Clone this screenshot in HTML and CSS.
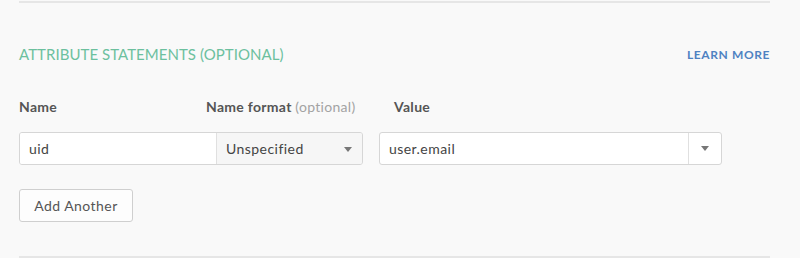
FILE: index.html
```html
<!DOCTYPE html>
<html lang="en">
<head>
    <meta charset="UTF-8">
    <meta name="viewport" content="width=device-width, initial-scale=1.0">
    <title>Attribute Statements</title>
    <link rel="stylesheet" href="styles.css">
</head>
<body>
    <div class="container">
        <div class="rule top"></div>
        <div class="header">
            <h2 class="title">ATTRIBUTE STATEMENTS (OPTIONAL)</h2>
            <a class="learn" href="#">LEARN MORE</a>
        </div>
        <div class="labels">
            <span class="label name">Name</span>
            <span class="label format">Name format <em>(optional)</em></span>
            <span class="label value">Value</span>
        </div>
        <div class="row">
            <div class="combo">
                <div class="field uid">uid</div>
                <div class="field select">
                    Unspecified
                    <span class="caret"></span>
                </div>
            </div>
            <div class="field valuebox">
                <span class="val">user.email</span>
                <span class="drop"><span class="caret"></span></span>
            </div>
        </div>
        <button class="add">Add Another</button>
        <div class="rule bottom"></div>
    </div>
</body>
</html>
```

FILE: styles.css
```css
/* Basic Reset */
* {
    box-sizing: border-box;
    margin: 0;
    padding: 0;
    font-family: Lato, 'Open Sans', sans-serif;
}

body {
    background-color: #f9f9f9;
    width: 800px;
    height: 258px;
    overflow: hidden;
}

.container {
    width: 751px;
    margin-left: 19px;
}

.rule {
    height: 2px;
    background: #e6e6e6;
}

.rule.top {
    margin-top: 1px;
}

.rule.bottom {
    margin-top: 34px;
}

.header {
    display: flex;
    justify-content: space-between;
    align-items: center;
    margin-top: 41px;
    height: 20px;
}

.title {
    font-size: 15px;
    font-weight: 400;
    color: #6cc09e;
    letter-spacing: 0.05px;
}

.learn {
    font-size: 12px;
    font-weight: 700;
    color: #4f82c2;
    text-decoration: none;
    letter-spacing: 0.6px;
}

.labels {
    display: flex;
    margin-top: 32px;
    height: 20px;
    align-items: center;
}

.label {
    font-size: 14px;
    font-weight: 700;
    color: #555;
    letter-spacing: 0.3px;
}

.label em {
    font-style: normal;
    font-weight: 400;
    color: #a3a3a3;
}

.label.name {
    width: 187px;
}

.label.format {
    width: 188px;
}

.row {
    display: flex;
    gap: 16px;
    margin-top: 16px;
}

.combo {
    display: flex;
    border: 1px solid #d6d6d6;
    border-radius: 3px;
    height: 33px;
    width: 344px;
    overflow: hidden;
}

.field {
    display: flex;
    align-items: center;
    font-size: 14px;
    color: #444;
    letter-spacing: 0.45px;
}

.uid {
    width: 197px;
    padding-left: 9px;
    background: #fff;
    border-right: 1px solid #e0e0e0;
}

.select {
    flex: 1;
    padding-left: 9px;
    background: #f6f6f6;
    position: relative;
}

.caret {
    width: 0;
    height: 0;
    border-left: 4px solid transparent;
    border-right: 4px solid transparent;
    border-top: 5px solid #777;
}

.select .caret {
    position: absolute;
    right: 10px;
    top: 14px;
}

.valuebox {
    width: 343px;
    height: 33px;
    background: #fff;
    border: 1px solid #d6d6d6;
    border-radius: 3px;
}

.val {
    flex: 1;
    padding-left: 9px;
}

.drop {
    width: 33px;
    height: 100%;
    border-left: 1px solid #e0e0e0;
    display: flex;
    align-items: center;
    justify-content: center;
}

.add {
    display: block;
    margin-top: 24px;
    width: 114px;
    height: 33px;
    background: #fdfdfd;
    border: 1px solid #cfcfcf;
    border-radius: 3px;
    font-size: 14px;
    color: #555;
    letter-spacing: 0.45px;
    cursor: pointer;
}
```
